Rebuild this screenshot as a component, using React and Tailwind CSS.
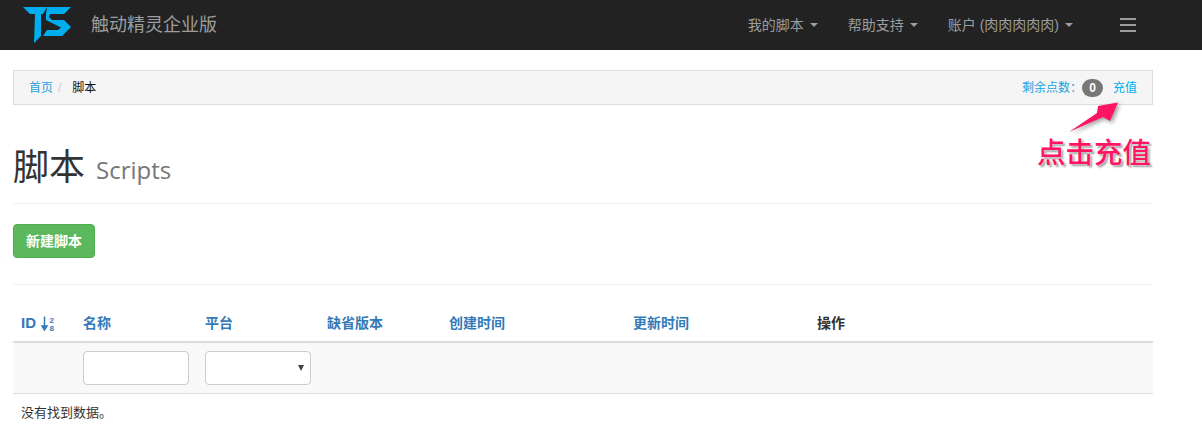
import React from 'react';

const sansStack = '"Liberation Sans", "Noto Sans CJK SC", sans-serif';

const Caret = () => (
  <span className="ml-[6px] inline-block w-0 h-0 align-middle border-x-[4px] border-x-transparent border-t-[4px] border-t-[#9d9d9d]" />
);

const Logo = () => (
  <svg width="48" height="36" viewBox="0 0 48 36" className="block">
    <path d="M0 0H24L20 7H18V29L11 36L12 7H7Z" fill="#00aeef" />
    <path d="M24 0H48L41 7H27L26 10L29 13H41L48 20L39 29H20L24 23H35L38 20.5L23 13V7Z" fill="#00aeef" />
  </svg>
);

const NavItem = ({ children }) => (
  <a className="flex items-center text-[14px] text-[#9d9d9d]">
    {children}
    <Caret />
  </a>
);

const SortIcon = () => (
  <svg width="13" height="15" viewBox="0 0 13 15" className="ml-[5px]">
    <path d="M3.5 0.5V11.5M1 10L3.5 14L6 10Z" fill="#337ab7" stroke="#337ab7" strokeWidth="1.5" />
    <text x="8.5" y="6.5" fontSize="8" fontWeight="700" fill="#337ab7">2</text>
    <text x="8.5" y="14.5" fontSize="8" fontWeight="700" fill="#337ab7">8</text>
  </svg>
);

const columns = [
  { label: '名称', width: 'w-[122px]' },
  { label: '平台', width: 'w-[122px]' },
  { label: '缺省版本', width: 'w-[122px]' },
  { label: '创建时间', width: 'w-[184px]' },
  { label: '更新时间', width: 'w-[184px]' },
];

export default function App() {
  return (
    <div className="relative min-h-[425px] bg-white text-[#333] overflow-hidden" style={{ fontFamily: sansStack }}>
      <nav className="h-[50px] bg-[#222] flex items-center pl-[23px]">
        <div className="pt-[7px] self-start"><Logo /></div>
        <span className="ml-[20px] text-[18px] text-[#9d9d9d]">触动精灵企业版</span>
        <div className="ml-auto flex items-center gap-[30px] pr-[129px]">
          <NavItem>我的脚本</NavItem>
          <NavItem>帮助支持</NavItem>
          <NavItem>账户 (肉肉肉肉肉)</NavItem>
        </div>
      </nav>
      <div className="absolute top-[18px] left-[1120px] w-[16px] flex flex-col gap-[4px]">
        <span className="h-[2px] bg-[#9d9d9d]" />
        <span className="h-[2px] bg-[#9d9d9d]" />
        <span className="h-[2px] bg-[#9d9d9d]" />
      </div>

      <main className="w-[1140px] ml-[13px]">
        <div className="mt-[20px] h-[35px] flex items-center justify-between pl-[15px] pr-[15px] bg-[#f5f5f5] border border-[#ddd] text-[12px]">
          <div className="flex items-center">
            <a className="text-[#23a0e0]">首页</a>
            <span className="ml-[5px] mr-[11px] text-[#ccc]">/</span>
            <span className="text-[#111]">脚本</span>
          </div>
          <div className="flex items-center">
            <span className="w-[60px] whitespace-nowrap text-[#23a0e0]">剩余点数：</span>
            <span className="w-[21px] h-[18px] rounded-[9px] bg-[#777] text-white text-[12px] font-bold flex items-center justify-center">0</span>
            <a className="ml-[10px] text-[#00aeef]">充值</a>
          </div>
        </div>

        <div className="mt-[40px] h-[59px] border-b border-[#eee] flex items-baseline">
          <h1 className="text-[36px] leading-[45px] font-normal text-[#333]">脚本</h1>
          <small className="ml-[11px] text-[24px] text-[#777] -translate-y-px" style={{ fontFamily: '"Open Sans", sans-serif' }}>Scripts</small>
        </div>

        <button className="mt-[20px] block w-[82px] h-[34px] rounded-[4px] bg-[#5cb85c] border border-[#4cae4c] text-white text-[14px] font-bold">新建脚本</button>

        <div className="mt-[26px] border-t border-[#eee]" />

        <div className="flex h-[58px] items-end pb-[8px] border-b-2 border-[#ddd] text-[14px] leading-[20px] font-bold text-[#337ab7]">
          <div className="w-[70px] pl-[8px] flex items-center text-[15px]">ID<SortIcon /></div>
          {columns.map((c) => (
            <div key={c.label} className={c.width}>{c.label}</div>
          ))}
          <div className="text-[#333]">操作</div>
        </div>

        <div className="flex h-[51px] items-center bg-[#f9f9f9] border-b border-[#ddd]">
          <div className="w-[70px]" />
          <div className="w-[122px]">
            <input className="block w-[106px] h-[34px] bg-white border border-[#ccc] rounded-[4px]" />
          </div>
          <div className="relative w-[106px] h-[34px] bg-white border border-[#ccc] rounded-[4px]">
            <span className="absolute right-[6px] top-[13px] w-0 h-0 border-x-[3px] border-x-transparent border-t-[6px] border-t-[#444]" />
          </div>
        </div>

        <div className="pl-[8px] pt-[9px] text-[13px] text-[#333]">没有找到数据。</div>
      </main>

      {/* annotation drawn on top of the screenshot */}
      <svg width="60" height="40" viewBox="0 0 60 40" className="absolute left-[1065px] top-[97px]" style={{ filter: 'drop-shadow(2px 2px 2px rgba(0,0,0,0.4))' }}>
        <path d="M4 35L32 16L33 9L53 5.5L45 24L38 20Z" fill="#ff1464" />
      </svg>
      <div
        className="absolute left-[1037px] top-[136px] text-[28.5px] leading-[34px] font-medium text-[#ff1464]"
        style={{ textShadow: '0 0 2px #fff, 2px 2px 2px rgba(0,0,0,0.4)' }}
      >
        点击充值
      </div>
    </div>
  );
}
